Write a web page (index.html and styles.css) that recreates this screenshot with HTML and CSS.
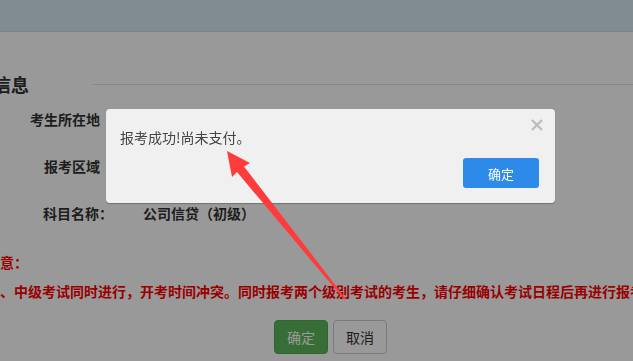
FILE: index.html
```html
<!DOCTYPE html>
<html lang="zh-CN">
<head>
<meta charset="utf-8">
<title>报考信息</title>
<link rel="stylesheet" href="styles.css">
</head>
<body>
<div class="topbar"></div>
<main class="page">
  <div class="title-row">
    <h3 class="title">报考信息</h3>
    <div class="rule"></div>
  </div>
  <div class="row row-first">
    <span class="label">考生所在地</span>
  </div>
  <div class="row">
    <span class="label">报考区域</span>
  </div>
  <div class="row">
    <span class="label label-colon">科目名称：</span>
    <span class="value">公司信贷（初级）</span>
  </div>
  <p class="notice-title">注意：</p>
  <p class="notice-text">初级、中级考试同时进行，开考时间冲突。同时报考两个级别考试的考生，请仔细确认考试日程后再进行报考。</p>
  <div class="actions">
    <button class="btn btn-ok">确定</button>
    <button class="btn btn-cancel">取消</button>
  </div>
</main>

<div class="mask"></div>

<div class="dialog">
  <svg class="close" width="12" height="12" viewBox="0 0 12 12"><path d="M1 1 L11 11 M11 1 L1 11" stroke="#bdbdbd" stroke-width="2.4" fill="none"/></svg>
  <p class="dialog-msg">报考成功!尚未支付。</p>
  <div class="dialog-foot">
    <button class="dialog-btn">确定</button>
  </div>
</div>

<svg class="arrow" width="633" height="361" viewBox="0 0 633 361">
  <polygon points="227,151 250,163 244,166.5 346,299 344,299.5 237,172 232,177" fill="#ff3c3c"/>
</svg>
</body>
</html>
```

FILE: styles.css
```css
* { box-sizing: border-box; }
html, body {
  margin: 0;
  padding: 0;
  width: 633px;
  height: 361px;
  overflow: hidden;
  background: #fff;
  font-family: "Noto Sans CJK SC", "Noto Sans", sans-serif;
  color: #333;
}
.topbar {
  height: 32px;
  background: #d8e9f3;
  border-bottom: 1px solid #c8dae6;
}
.page {
  display: flex;
  flex-direction: column;
}
.title-row {
  display: flex;
  align-items: center;
  margin-top: 40px;
  height: 24px;
}
.title {
  margin: 0 0 0 -43px;
  font-size: 18px;
  line-height: 24px;
  font-weight: bold;
  white-space: nowrap;
}
.rule {
  flex: 1;
  height: 1px;
  margin-left: 64px;
  background: #e5e5e5;
}
.row {
  display: flex;
  align-items: center;
  height: 20px;
  line-height: 20px;
  font-size: 14px;
  font-weight: bold;
  margin-top: 27px;
}
.row-first { margin-top: 13px; }
.label {
  width: 100px;
  text-align: right;
  white-space: nowrap;
}
.label-colon { width: 113px; }
.value { margin-left: 30px; }
.notice-title {
  margin: 29px 0 0 -14px;
  font-size: 14px;
  line-height: 20px;
  font-weight: bold;
  color: #ff0000;
}
.notice-text {
  margin: 9px 0 0 -28px;
  font-size: 14px;
  line-height: 20px;
  font-weight: bold;
  color: #ff0000;
  white-space: nowrap;
}
.actions {
  display: flex;
  gap: 5px;
  margin-top: 19px;
  padding-left: 274px;
}
.btn {
  height: 34px;
  width: 54px;
  border-radius: 4px;
  font-family: inherit;
  font-size: 14px;
  padding: 0;
}
.btn-ok {
  background: #5cb85c;
  border: 1px solid #4cae4c;
  color: #fff;
}
.btn-cancel {
  background: #fff;
  border: 1px solid #ccc;
  color: #333;
}
.mask {
  position: fixed;
  inset: 0;
  background: rgba(0, 0, 0, 0.4);
}
.dialog {
  position: absolute;
  left: 106px;
  top: 109px;
  width: 449px;
  height: 94px;
  background: #f0f0f0;
  border-radius: 4px;
  box-shadow: 0 1px 1px rgba(0, 0, 0, 0.25);
  padding: 18px 16px 15px 14px;
  display: flex;
  flex-direction: column;
}
.close {
  position: absolute;
  top: 10px;
  right: 12px;
}
.dialog-msg {
  margin: 0;
  font-size: 14px;
  line-height: 20px;
  color: #444;
}
.dialog-foot {
  display: flex;
  justify-content: flex-end;
  margin-top: 11px;
}
.dialog-btn {
  width: 76px;
  height: 30px;
  border: none;
  border-radius: 3px;
  background: #2e8ae8;
  color: #fff;
  font-family: inherit;
  font-size: 13px;
  padding: 0;
}
.arrow {
  position: absolute;
  left: 0;
  top: 0;
}
```
